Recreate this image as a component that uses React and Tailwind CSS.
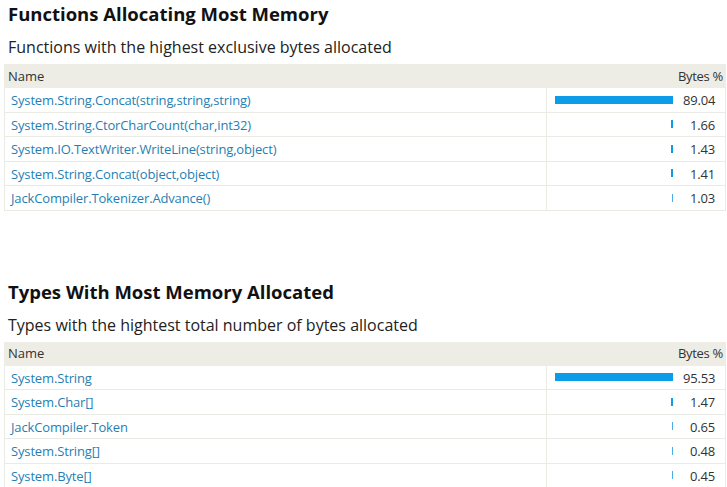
import React from "react";

const font = { fontFamily: '"Open Sans", "Noto Sans", sans-serif' };

const sections = [
  {
    title: "Functions Allocating Most Memory",
    subtitle: "Functions with the highest exclusive bytes allocated",
    rows: [
      ["System.String.Concat(string,string,string)", 89.04],
      ["System.String.CtorCharCount(char,int32)", 1.66],
      ["System.IO.TextWriter.WriteLine(string,object)", 1.43],
      ["System.String.Concat(object,object)", 1.41],
      ["JackCompiler.Tokenizer.Advance()", 1.03],
    ],
  },
  {
    title: "Types With Most Memory Allocated",
    subtitle: "Types with the hightest total number of bytes allocated",
    rows: [
      ["System.String", 95.53],
      ["System.Char[]", 1.47],
      ["JackCompiler.Token", 0.65],
      ["System.String[]", 0.48],
      ["System.Byte[]", 0.45],
    ],
  },
];

function Section({ s, first }) {
  const max = Math.max(...s.rows.map((r) => r[1]));
  return (
    <div className={first ? "" : "mt-[67px]"}>
      <div className="pl-[8px] h-[28px] leading-[28px] text-[18.5px] font-bold text-[#111]">
        {s.title}
      </div>
      <div className="pl-[8px] mt-[7px] mb-[5px] h-[24px] leading-[24px] text-[16px] text-[#222]">
        {s.subtitle}
      </div>
      <div className="ml-[4px] w-[722px]">
        <div className="flex h-[24px] items-center pt-[1px] bg-[#eeede5] text-[13px] text-[#333]">
          <div className="flex-1 pl-[4px]">Name</div>
          <div className="pr-[3px] tracking-[-0.3px]">Bytes %</div>
        </div>
        {s.rows.map(([name, v]) => {
          const w = Math.max(1, (v / max) * 118);
          const thick = w >= 1.8;
          return (
            <div
              key={name}
              className="flex h-[24.5px] box-border border-b border-l border-r border-[#ebebe6] text-[13px]"
            >
              <div className="w-[542px] box-border border-r border-[#ebebe6] pl-[6px] pt-[2px] flex items-center text-[#1f7fb4] whitespace-nowrap tracking-[-0.15px]">
                {name}
              </div>
              <div className="flex-1 flex items-center justify-end pr-[10px] pt-[2px]">
                <div className="w-[118px] flex justify-end mr-[10px] -mt-[2px]">
                  <div
                    className={thick ? "h-[8px] bg-[#0d9ce8]" : "h-[8px] bg-[#4aaee6]"}
                    style={{ width: `${Math.round(Math.max(w, 1))}px` }}
                  />
                </div>
                <div className="w-[32px] text-right text-[#333] tracking-[-0.2px]">{v.toFixed(2)}</div>
              </div>
            </div>
          );
        })}
      </div>
    </div>
  );
}

export default function App() {
  return (
    <div className="w-[727px] h-[487px] overflow-hidden bg-white" style={font}>
      {sections.map((s, i) => (
        <Section key={i} s={s} first={i === 0} />
      ))}
    </div>
  );
}
